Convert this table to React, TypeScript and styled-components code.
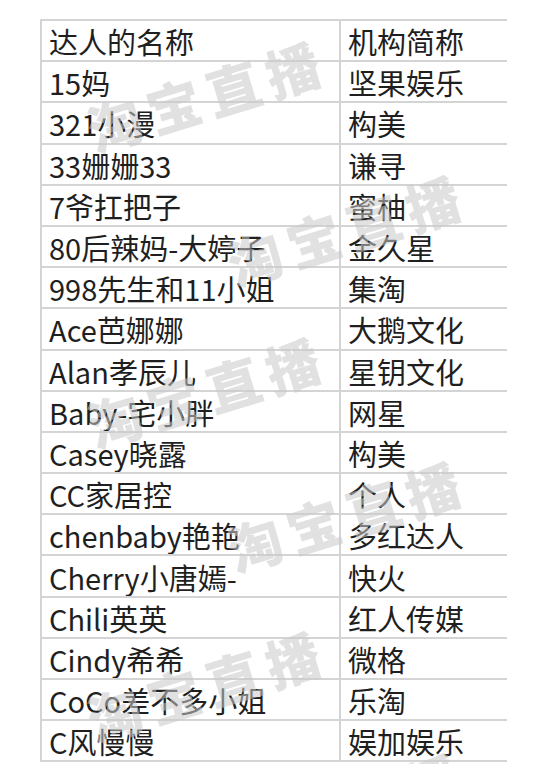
import React from 'react';
import styled, {createGlobalStyle} from 'styled-components';

const GlobalStyle = createGlobalStyle`
  html, body {
    margin: 0;
    padding: 0;
    background: #ffffff;
  }

  body {
    font-family: "Noto Sans CJK SC", "Noto Sans", sans-serif;
    color: #1f1f1f;
    overflow: hidden;
  }
`

const Page = styled.div`
  position: relative;
  width: 550px;
  height: 764px;
  overflow: hidden;
  padding: 19px 0 0 40px;
  box-sizing: border-box;
`

const Table = styled.div`
  display: grid;
  grid-template-columns: 299px 166px;
  grid-auto-rows: 41.2px;
  border-top: 2px solid #d4d4d4;
  border-left: 2px solid #d4d4d4;
  width: fit-content;
`

const Cell = styled.div<{$last?: boolean}>`
  display: flex;
  align-items: center;
  box-sizing: border-box;
  padding: 2px 0 0 7px;
  border-bottom: 2px solid #d4d4d4;
  border-right: ${p => p.$last ? 'none' : '2px solid #d4d4d4'};
  font-size: 29px;
  line-height: 1;
  white-space: nowrap;
  overflow: hidden;
`

const Watermark = styled.span`
  position: absolute;
  transform: translate(-50%, -50%) rotate(-17deg);
  font-family: "Noto Sans CJK SC", sans-serif;
  font-weight: 900;
  font-size: 54px;
  letter-spacing: 8px;
  color: rgba(200, 200, 200, 0.55);
  white-space: nowrap;
  pointer-events: none;
`

const rows: [string, string][] = [
    ['达人的名称', '机构简称'],
    ['15妈', '坚果娱乐'],
    ['321小漫', '构美'],
    ['33姗姗33', '谦寻'],
    ['7爷扛把子', '蜜柚'],
    ['80后辣妈-大婷子', '金久星'],
    ['998先生和11小姐', '集淘'],
    ['Ace芭娜娜', '大鹅文化'],
    ['Alan孝辰儿', '星钥文化'],
    ['Baby-宅小胖', '网星'],
    ['Casey晓露', '构美'],
    ['CC家居控', '个人'],
    ['chenbaby艳艳', '多红达人'],
    ['Cherry小唐嫣-', '快火'],
    ['Chili英英', '红人传媒'],
    ['Cindy希希', '微格'],
    ['CoCo差不多小姐', '乐淘'],
    ['C风慢慢', '娱加娱乐'],
]

// watermark centres, read off the picture
const marks = [
    {x: 207, y: 94},
    {x: 347, y: 228},
    {x: 207, y: 390},
    {x: 347, y: 514},
    {x: 207, y: 684},
    {x: 347, y: 806},
]

const App: React.FC = () => {
    return (
        <Page>
            <GlobalStyle/>
            <Table>
                {rows.map(([name, org], i) => (
                    <React.Fragment key={i}>
                        <Cell>{name}</Cell>
                        <Cell $last>{org}</Cell>
                    </React.Fragment>
                ))}
            </Table>
            {marks.map((m, i) => (
                <Watermark key={i} style={{left: m.x, top: m.y}}>淘宝直播</Watermark>
            ))}
        </Page>
    );
}

export default App
